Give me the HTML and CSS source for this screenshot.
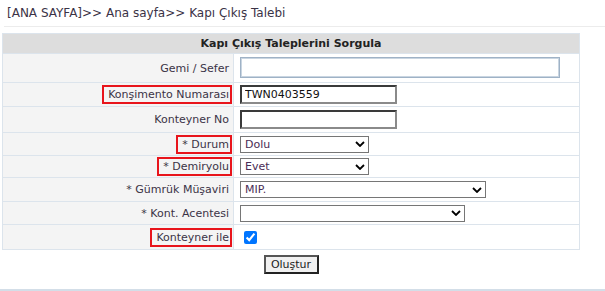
FILE: index.html
```html
<!DOCTYPE html>
<html lang="tr">
<head>
<meta charset="utf-8">
<title>Kapı Çıkış Talebi</title>
<link rel="stylesheet" href="styles.css">
</head>
<body>
<div class="crumb">[ANA SAYFA]&gt;&gt; Ana sayfa&gt;&gt; Kapı Çıkış Talebi</div>
<div class="form">
  <div class="head">Kapı Çıkış Taleplerini Sorgula</div>

  <div class="lbl">Gemi / Sefer</div>
  <div class="val"><input class="txt txt-wide" type="text"></div>

  <div class="lbl"><span class="mark">Konşimento Numarası</span></div>
  <div class="val"><input class="txt txt-dark" type="text" value="TWN0403559"></div>

  <div class="lbl">Konteyner No</div>
  <div class="val"><input class="txt txt-dark" type="text"></div>

  <div class="lbl"><span class="mark">* Durum</span></div>
  <div class="val"><div class="sel sel-s"><span>Dolu</span><svg class="chev" viewBox="0 0 10 6" width="10" height="6"><path d="M1 1 L5 5 L9 1" fill="none" stroke="#000" stroke-width="1.8"/></svg></div></div>

  <div class="lbl"><span class="mark">* Demiryolu</span></div>
  <div class="val"><div class="sel sel-s"><span>Evet</span><svg class="chev" viewBox="0 0 10 6" width="10" height="6"><path d="M1 1 L5 5 L9 1" fill="none" stroke="#000" stroke-width="1.8"/></svg></div></div>

  <div class="lbl">* Gümrük Müşaviri</div>
  <div class="val"><div class="sel sel-l"><span>MIP.</span><svg class="chev" viewBox="0 0 10 6" width="10" height="6"><path d="M1 1 L5 5 L9 1" fill="none" stroke="#000" stroke-width="1.8"/></svg></div></div>

  <div class="lbl">* Kont. Acentesi</div>
  <div class="val"><div class="sel sel-m"><span></span><svg class="chev" viewBox="0 0 10 6" width="10" height="6"><path d="M1 1 L5 5 L9 1" fill="none" stroke="#000" stroke-width="1.8"/></svg></div></div>

  <div class="lbl"><span class="mark">Konteyner ile</span></div>
  <div class="val"><input class="chk" type="checkbox" checked></div>
</div>
<div class="actions"><button class="btn" type="button">Oluştur</button></div>
<div class="foot"></div>
</body>
</html>
```

FILE: styles.css
```css
html, body {
  margin: 0;
  padding: 0;
  background: #fff;
}
body {
  font-family: "DejaVu Sans", Verdana, sans-serif;
  font-size: 11px;
  color: #3b3346;
  width: 605px;
  height: 291px;
  overflow: hidden;
  position: relative;
}
.crumb {
  font-size: 12px;
  padding: 6px 0 0 3px;
  height: 27px;
  box-sizing: border-box;
  margin-left: 4px;
  border-bottom: 1px solid #ececec;
  line-height: 15px;
}
.form {
  margin: 6px 0 0 2px;
  width: 578px;
  box-sizing: border-box;
  display: grid;
  grid-template-columns: 230px 345px;
  grid-template-rows: 19px 28px 23px 25px 22px 21px 23px 22px 24px;
  gap: 1px;
  background: #dce4ec;
  border: 1px solid #dce4ec;
}
.head {
  grid-column: 1 / 3;
  background: #dddddd;
  font-weight: bold;
  color: #222;
  text-align: center;
  line-height: 19px;
}
.lbl {
  background: #f4f4f4;
  display: flex;
  align-items: center;
  justify-content: flex-end;
  padding-right: 4px;
}
.val {
  background: #fff;
  display: flex;
  align-items: center;
  padding-left: 6px;
}
.mark {
  outline: 2px solid #e8141b;
  outline-offset: 1px;
  padding-left: 3px;
  line-height: 13px;
}
.txt {
  box-sizing: border-box;
  margin: 0;
  font-family: "DejaVu Sans", Verdana, sans-serif;
  font-size: 11px;
  color: #111;
  background: #fff;
  padding: 0 3px;
}
.txt-wide {
  width: 320px;
  height: 21px;
  border: 1px solid #9fb2c6;
  box-shadow: inset 0 0 0 1px #c9d5e1;
  margin-top: -1px;
}
.txt-dark {
  width: 157px;
  height: 19px;
  border: 2px solid;
  border-color: #3a3a3a #8a8a8a #8a8a8a #3a3a3a;
}
.sel {
  box-sizing: border-box;
  height: 17px;
  border: 1px solid #767676;
  background: #fff;
  display: flex;
  align-items: center;
  justify-content: space-between;
  padding: 0 3px 0 4px;
  color: #4a2c55;
}
.sel-s { width: 129px; }
.sel-l { width: 246px; }
.sel-m { width: 225px; }
.chev { flex: none; }
.chk {
  width: 13px;
  height: 13px;
  margin: 0 0 0 4px;
  accent-color: #0075ff;
}
.actions {
  display: flex;
  justify-content: center;
  margin-left: 2px;
  width: 578px;
  padding-top: 5px;
}
.btn {
  font-family: "DejaVu Sans", Verdana, sans-serif;
  font-size: 11px;
  color: #222;
  background: #f0f0f0;
  border: 2px solid;
  border-color: #555 #222 #222 #555;
  width: 55px;
  height: 19px;
  padding: 0;
  line-height: 14px;
}
.foot {
  position: absolute;
  left: 0;
  right: 0;
  top: 289px;
  height: 2px;
  background: #d3dee8;
}
```
